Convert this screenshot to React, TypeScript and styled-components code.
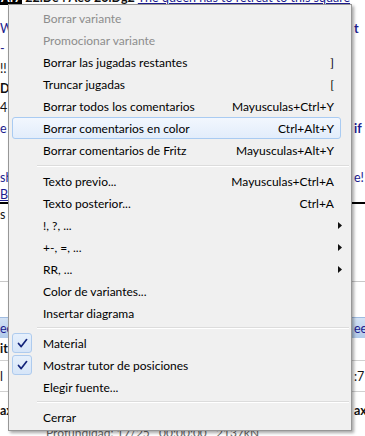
import React from "react";
import styled, { createGlobalStyle } from "styled-components";

const Global = createGlobalStyle`
  html, body { margin: 0; padding: 0; background: #ffffff; }
  body { font-family: Lato, "Noto Sans", sans-serif; }
`;

const Page = styled.div`
  position: relative;
  width: 365px;
  height: 436px;
  overflow: hidden;
  background: #ffffff;
`;

/* ---------- background application (mostly hidden behind menu) ---------- */

const Backdrop = styled.div`
  display: flex;
  flex-direction: column;
  width: 365px;
  font-family: Lato, "Noto Sans", sans-serif;
  font-size: 12.5px;
  color: #111;
`;

const TopLine = styled.div`
  height: 16px;
  line-height: 16px;
  margin-top: -10px;
  white-space: nowrap;
  font-weight: 700;
  overflow: hidden;
`;

const MoveMark = styled.span`
  background: #000;
  color: #fff;
  padding: 0 1px;
`;

const Link = styled.span<{ $bold?: boolean }>`
  color: #1c1c8e;
  text-decoration: underline;
  font-weight: ${(p) => (p.$bold ? 700 : 400)};
`;

const Row = styled.div<{ $h: number }>`
  display: grid;
  grid-template-columns: 1fr 11px;
  height: ${(p) => p.$h}px;
  align-items: center;
  white-space: nowrap;
  overflow: hidden;
`;

const Frag = styled.span<{ $c?: string; $bold?: boolean; $u?: boolean }>`
  overflow: hidden;
  color: ${(p) => p.$c || "#111"};
  font-weight: ${(p) => (p.$bold ? 700 : 400)};
  text-decoration: ${(p) => (p.$u ? "underline" : "none")};
`;

const Rule = styled.div<{ $c: string; $t: number }>`
  height: ${(p) => p.$t}px;
  background: ${(p) => p.$c};
`;

const Bar = styled.div`
  display: grid;
  grid-template-columns: 1fr 11px;
  height: 20px;
  align-items: center;
  background: linear-gradient(#d3e2f5, #b2cbea);
  border-top: 1px solid #9fbbe0;
  color: #1c1c8e;
  white-space: nowrap;
  overflow: hidden;
`;

const Status = styled.div`
  height: 14px;
  line-height: 14px;
  padding-left: 46px;
  color: #666;
  font-size: 12px;
  white-space: nowrap;
`;

/* ---------- context menu ---------- */

const Menu = styled.div`
  position: absolute;
  left: 8px;
  top: 4px;
  width: 344px;
  box-sizing: border-box;
  padding: 2px;
  background: #f0f0f0;
  border: 1px solid #979797;
  box-shadow: 2px 2px 3px rgba(0, 0, 0, 0.35);
  font-family: Lato, "Noto Sans", sans-serif;
  font-size: 12px;
  color: #000;
  display: flex;
  flex-direction: column;
`;

const Item = styled.div<{ $active?: boolean; $disabled?: boolean }>`
  position: relative;
  isolation: isolate;
  display: grid;
  grid-template-columns: 32px 1fr auto 15px;
  align-items: center;
  height: 22px;
  white-space: nowrap;
  color: ${(p) => (p.$disabled ? "#8d8d8d" : "#000")};

  &::before {
    content: "";
    display: ${(p) => (p.$active ? "block" : "none")};
    position: absolute;
    top: 0;
    bottom: 0;
    left: 1px;
    right: 8px;
    z-index: -1;
    border: 1px solid #a9cbf2;
    border-radius: 3px;
    background: linear-gradient(#f2f7fe, #e2edfb);
  }
`;

const Gutter = styled.div`
  display: flex;
  align-items: center;
  height: 100%;
`;

const CheckBox = styled.div`
  margin-left: 1px;
  width: 20px;
  height: 20px;
  box-sizing: border-box;
  border: 1px solid #aecbee;
  border-radius: 3px;
  background: linear-gradient(#e6f0fc, #d6e5f8);
  display: flex;
  align-items: center;
  justify-content: center;
`;

const Label = styled.span``;

const Shortcut = styled.span`
  text-align: right;
  padding-left: 24px;
`;

const ArrowCell = styled.div`
  display: flex;
  align-items: center;
  padding-left: 4px;
`;

const Separator = styled.div<{ $h: number }>`
  height: ${(p) => p.$h}px;
  display: flex;
  flex-direction: column;
  justify-content: center;
  padding-left: 26px;

  &::before {
    content: "";
    display: block;
    height: 1px;
    background: #dcdcdc;
  }
  &::after {
    content: "";
    display: block;
    height: 1px;
    background: #ffffff;
  }
`;

type Entry =
  | { sep: number }
  | {
      label: string;
      shortcut?: string;
      disabled?: boolean;
      active?: boolean;
      sub?: boolean;
      checked?: boolean;
    };

const entries: Entry[] = [
  { label: "Borrar variante", disabled: true },
  { label: "Promocionar variante", disabled: true },
  { label: "Borrar las jugadas restantes", shortcut: "]" },
  { label: "Truncar jugadas", shortcut: "[" },
  { label: "Borrar todos los comentarios", shortcut: "Mayusculas+Ctrl+Y" },
  { label: "Borrar comentarios en color", shortcut: "Ctrl+Alt+Y", active: true },
  { label: "Borrar comentarios de Fritz", shortcut: "Mayusculas+Alt+Y" },
  { sep: 9 },
  { label: "Texto previo...", shortcut: "Mayusculas+Ctrl+A" },
  { label: "Texto posterior...", shortcut: "Ctrl+A" },
  { label: "!, ?, ...", sub: true },
  { label: "+-, =, ...", sub: true },
  { label: "RR, ...", sub: true },
  { label: "Color de variantes..." },
  { label: "Insertar diagrama" },
  { sep: 8 },
  { label: "Material", checked: true },
  { label: "Mostrar tutor de posiciones", checked: true },
  { label: "Elegir fuente..." },
  { sep: 8 },
  { label: "Cerrar" },
];

const Check = () => (
  <svg width="11" height="11" viewBox="0 0 11 11">
    <path d="M1.5 5.5 L4.2 8.6 L9.6 1.6" fill="none" stroke="#12237a" strokeWidth="1.7" strokeLinecap="round" strokeLinejoin="round" />
  </svg>
);

const Arrow = () => (
  <svg width="4" height="7" viewBox="0 0 4 7">
    <polygon points="0,0 4,3.5 0,7" fill="#111" />
  </svg>
);

export default function App() {
  return (
    <Page>
      <Global />
      <Backdrop>
        <TopLine>
          <MoveMark>Af7</MoveMark> 22.De4 Ae6 23.Dg2{" "}
          <Link>The queen has to retreat to this square</Link>
        </TopLine>
        <Row $h={12} />
        <Row $h={20}>
          <Frag $c="#1c1c8e">White</Frag>
          <Frag $c="#1c1c8e" $bold>
            t
          </Frag>
        </Row>
        <Row $h={20}>
          <Frag $c="#1c1c8e">- .</Frag>
          <Frag />
        </Row>
        <Row $h={21}>
          <Frag>!!</Frag>
          <Frag />
        </Row>
        <Row $h={19}>
          <Frag $bold>Dxe4</Frag>
          <Frag />
        </Row>
        <Row $h={19}>
          <Frag>4</Frag>
          <Frag />
        </Row>
        <Row $h={23}>
          <Frag $c="#1c1c8e">e</Frag>
          <Frag $c="#1c1c8e" $bold>
            if
          </Frag>
        </Row>
        <Row $h={27} />
        <Row $h={20}>
          <Frag $c="#1c1c8e">sh</Frag>
          <Frag $c="#1c1c8e">e!</Frag>
        </Row>
        <Row $h={15}>
          <Frag $c="#1c1c8e" $u>
            Bl
          </Frag>
          <Frag />
        </Row>
        <Rule $c="#000" $t={2} />
        <Row $h={20}>
          <Frag>s</Frag>
          <Frag />
        </Row>
        <Row $h={57} />
        <Rule $c="#c8c8c8" $t={1} />
        <Row $h={35} />
        <Bar>
          <span>ee</span>
          <span>ee</span>
        </Bar>
        <Row $h={20}>
          <Frag $bold>it</Frag>
          <Frag />
        </Row>
        <Row $h={2} />
        <Rule $c="#d0d0d0" $t={1} />
        <Row $h={30}>
          <Frag>l</Frag>
          <Frag>:71</Frag>
        </Row>
        <Rule $c="#d0d0d0" $t={1} />
        <Row $h={8} />
        <Row $h={20}>
          <Frag $bold>ax</Frag>
          <Frag $bold>ax</Frag>
        </Row>
        <Row $h={6} />
        <Status>Profundidad: 17/25&nbsp;&nbsp;&nbsp;00:00:00&nbsp;&nbsp;&nbsp;2137kN</Status>
      </Backdrop>

      <Menu>
        {entries.map((e, i) =>
          "sep" in e ? (
            <Separator key={i} $h={e.sep} />
          ) : (
            <Item key={i} $active={e.active} $disabled={e.disabled}>
              <Gutter>
                {e.checked && (
                  <CheckBox>
                    <Check />
                  </CheckBox>
                )}
              </Gutter>
              <Label>{e.label}</Label>
              <Shortcut>{e.shortcut}</Shortcut>
              <ArrowCell>{e.sub && <Arrow />}</ArrowCell>
            </Item>
          )
        )}
      </Menu>
    </Page>
  );
}
